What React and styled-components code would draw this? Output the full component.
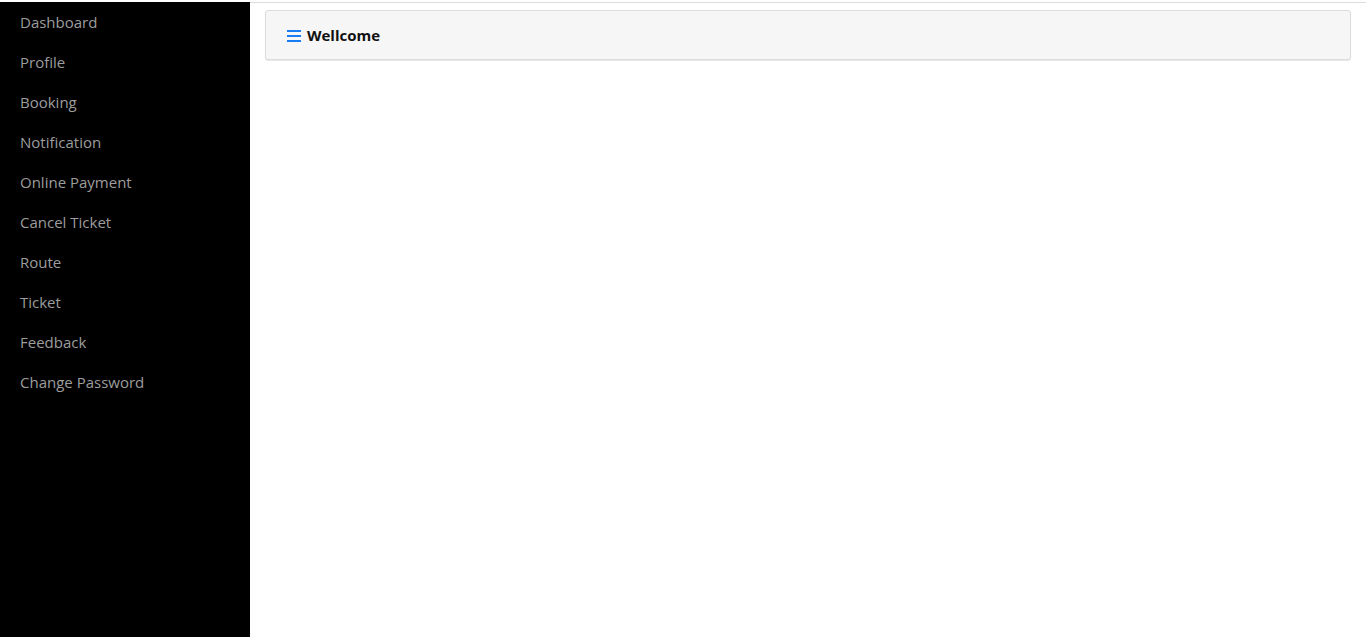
import styled, { createGlobalStyle } from "styled-components";

const menu = [
  "Dashboard",
  "Profile",
  "Booking",
  "Notification",
  "Online Payment",
  "Cancel Ticket",
  "Route",
  "Ticket",
  "Feedback",
  "Change Password",
];

const GlobalStyle = createGlobalStyle`
  * { box-sizing: border-box; }
  html, body, #root { height: 100%; }
  body {
    margin: 0;
    font-family: "Open Sans", "Noto Sans", sans-serif;
    background: #fff;
  }
`;

export default function App() {
  return (
    <>
      <GlobalStyle />
      <Page>
        <SideBar>
          {menu.map((item, index) => (
            <MenuLink key={index} href="#">
              {item}
            </MenuLink>
          ))}
        </SideBar>
        <Main>
          <HeaderCard>
            <MenuIcon viewBox="0 0 14 12">
              <rect x="0" y="0" width="14" height="2" />
              <rect x="0" y="5" width="14" height="2" />
              <rect x="0" y="10" width="14" height="2" />
            </MenuIcon>
            <h1>Wellcome</h1>
          </HeaderCard>
        </Main>
      </Page>
    </>
  );
}

const Page = styled.div`
  display: flex;
  height: 100%;
  border-top: 2px solid #e6e6e6;
  border-top-color: #fff;
  box-shadow: inset 0 1px 0 #dcdcdc;
`;

const SideBar = styled.nav`
  width: 250px;
  flex-shrink: 0;
  background-color: #000;
  display: flex;
  flex-direction: column;
  padding-top: 0;
`;

const MenuLink = styled.a`
  display: block;
  height: 40px;
  line-height: 40px;
  padding-left: 20px;
  color: #9d9d9d;
  font-size: 15px;
  text-decoration: none;
`;

const Main = styled.main`
  flex: 1;
  padding: 8px 15px 0;
`;

const HeaderCard = styled.header`
  height: 50px;
  display: flex;
  align-items: center;
  gap: 6px;
  padding-left: 21px;
  background-color: #f6f6f6;
  border: 1px solid #dcdcdc;
  border-radius: 3px;
  box-shadow: 0 1px 1px rgba(0, 0, 0, 0.1);

  h1 {
    margin: 0;
    font-size: 15px;
    font-weight: 700;
    color: #111;
  }
`;

const MenuIcon = styled.svg`
  width: 14px;
  height: 12px;
  margin-top: 2px;
  fill: #1a7cf5;
`;
